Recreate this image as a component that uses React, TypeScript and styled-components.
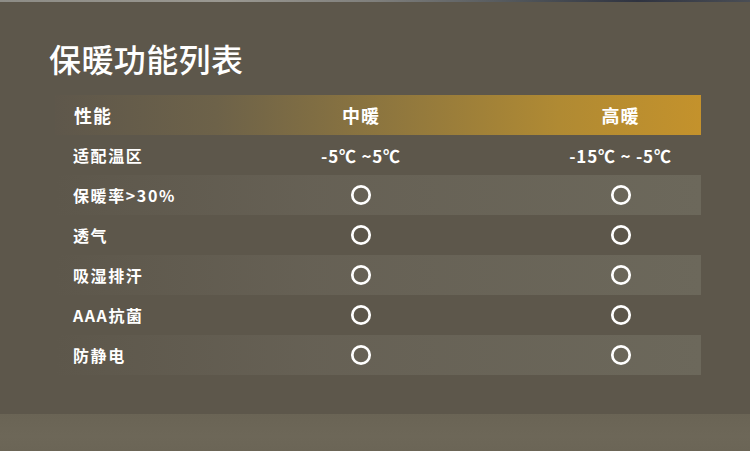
import React from 'react';
import styled, { createGlobalStyle } from 'styled-components';

const GlobalStyle = createGlobalStyle`
  html, body {
    margin: 0;
    padding: 0;
    background: #6c6657;
  }
  body {
    font-family: "Noto Sans CJK SC", "Noto Sans", sans-serif;
    color: #fff;
  }
`;

type Level = 'text' | 'check';

interface Row {
  name: string;
  kind: Level;
  mid?: string;
  high?: string;
}

const rows: Row[] = [
  { name: '适配温区', kind: 'text', mid: '-5℃ ~5℃', high: '-15℃ ~ -5℃' },
  { name: '保暖率>30%', kind: 'check' },
  { name: '透气', kind: 'check' },
  { name: '吸湿排汗', kind: 'check' },
  { name: 'AAA抗菌', kind: 'check' },
  { name: '防静电', kind: 'check' },
];

const Ring = () => (
  <svg width="22" height="22" viewBox="0 0 22 22">
    <circle cx="11" cy="11" r="8.7" fill="none" stroke="#fff" strokeWidth="2.7" />
  </svg>
);

const App = () => {
  return (
    <Page>
      <GlobalStyle />
      <PhotoStrip />
      <Panel>
        <Title>保暖功能列表</Title>
        <Table>
          <HeadRow>
            <NameCell $head>性能</NameCell>
            <MidCell $head>中暖</MidCell>
            <HighCell $head>高暖</HighCell>
          </HeadRow>
          {rows.map((row, i) => (
            <BodyRow key={row.name} $striped={i % 2 === 1}>
              <NameCell>{row.name}</NameCell>
              <MidCell>{row.kind === 'check' ? <Ring /> : row.mid}</MidCell>
              <HighCell>{row.kind === 'check' ? <Ring /> : row.high}</HighCell>
            </BodyRow>
          ))}
        </Table>
      </Panel>
      <Ground />
    </Page>
  );
};

export default App;

const Page = styled.div`
  width: 750px;
  height: 451px;
  display: flex;
  flex-direction: column;
  overflow: hidden;
`;

const PhotoStrip = styled.div`
  height: 2px;
  background: linear-gradient(
    90deg,
    #8d8c86 0%,
    #9a9891 30%,
    #7f7f7c 50%,
    #4f5459 70%,
    #2f3340 85%,
    #4a4e55 100%
  );
`;

const Panel = styled.div`
  height: 412px;
  background: #5d574b;
  padding: 35px 0 0 49px;
  box-sizing: border-box;
`;

const Ground = styled.div`
  flex: 1;
  background: linear-gradient(180deg, #6a6455 0%, #6d6758 60%, #6b6556 100%);
`;

const Title = styled.h1`
  margin: 0 0 15px;
  font-size: 32px;
  font-weight: 500;
  line-height: 43px;
  letter-spacing: 0.4px;
  color: #fff;
`;

const Table = styled.div`
  width: 646px;
  margin-left: 6px;
  display: flex;
  flex-direction: column;
`;

const HeadRow = styled.div`
  height: 40px;
  display: grid;
  grid-template-columns: 226px 160px 1fr;
  align-items: center;
  background: linear-gradient(
    90deg,
    #5e574b 0%,
    #6d6249 25%,
    #8c753f 50%,
    #b08a33 78%,
    #c4922c 100%
  );
`;

const BodyRow = styled.div<{ $striped: boolean }>`
  height: 40px;
  display: grid;
  grid-template-columns: 226px 160px 1fr;
  align-items: center;
  background: ${(p) =>
    p.$striped
      ? 'linear-gradient(90deg, rgba(108,103,91,0) 0%, rgba(108,103,91,0.6) 40%, #6c685b 100%)'
      : 'transparent'};
`;

const NameCell = styled.div<{ $head?: boolean }>`
  padding-left: ${(p) => (p.$head ? '19px' : '18px')};
  font-size: ${(p) => (p.$head ? '18px' : '16px')};
  font-weight: 700;
  letter-spacing: ${(p) => (p.$head ? '1px' : '1.6px')};
  white-space: nowrap;
`;

const MidCell = styled.div<{ $head?: boolean }>`
  display: flex;
  justify-content: center;
  align-items: center;
  font-size: ${(p) => (p.$head ? '18px' : '17px')};
  font-weight: 700;
  letter-spacing: ${(p) => (p.$head ? '1px' : '0.8px')};
  white-space: nowrap;
`;

const HighCell = styled(MidCell)`
  padding-left: 99px;
`;
